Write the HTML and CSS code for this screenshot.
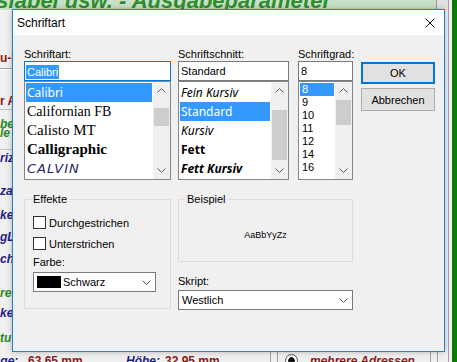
FILE: index.html
```html
<!DOCTYPE html>
<html lang="de">
<head>
    <meta charset="UTF-8">
    <meta name="viewport" content="width=device-width, initial-scale=1.0">
    <title>Schriftart</title>
    <link rel="stylesheet" href="styles.css">
</head>
<body>
    <div class="app">
        <div class="app-main">
            <div class="app-head">
                <div class="head-title"><span class="head-text">Adresslabel usw. - Ausgabeparameter</span></div>
                <div class="head-side"></div>
            </div>
            <div class="app-body">
                <div class="side">
                    <div class="side-row"></div>
                    <div class="side-row c-red">u-F</div>
                    <div class="side-row side-line"></div>
                    <div class="side-row c-red side-rule">r A</div>
                    <div class="side-row"></div>
                    <div class="side-row c-green">be</div>
                    <div class="side-row c-green">le</div>
                    <div class="side-row side-rule"></div>
                    <div class="side-row c-blue">riz</div>
                    <div class="side-row"></div>
                    <div class="side-row c-blue">zal</div>
                    <div class="side-row"></div>
                    <div class="side-row c-blue">ke</div>
                    <div class="side-row"></div>
                    <div class="side-row c-blue">gL</div>
                    <div class="side-row"></div>
                    <div class="side-row c-blue">chi</div>
                    <div class="side-row"></div>
                    <div class="side-row c-green">res</div>
                    <div class="side-row"></div>
                    <div class="side-row c-blue">ke</div>
                    <div class="side-row"></div>
                    <div class="side-row c-green">tu</div>
                </div>
            </div>
            <div class="app-foot">
                <span class="foot-label foot-first">Länge:</span>
                <span class="foot-value foot-w1">63,65 mm</span>
                <span class="foot-label foot-w2">Höhe:</span>
                <span class="foot-value foot-w3">32,95 mm</span>
                <span class="foot-sep"></span>
                <span class="foot-radio"></span>
                <span class="foot-value foot-option">mehrere Adressen</span>
                <span class="foot-sep"></span>
            </div>
        </div>
        <div class="app-edge"></div>
    </div>

    <div class="dialog">
        <div class="titlebar">
            <span class="title">Schriftart</span>
            <svg class="close" width="10" height="10" viewBox="0 0 10 10">
                <path d="M0.5 0.5L9.5 9.5M9.5 0.5L0.5 9.5" stroke="#111" stroke-width="1" fill="none"/>
            </svg>
        </div>

        <div class="dlg-body">
            <div class="pickers">
                <div class="picker col-font">
                    <div class="lbl">Schriftart:</div>
                    <div class="field is-focused"><span class="field-sel">Calibri</span></div>
                    <div class="listbox">
                        <ul class="items">
                            <li class="item is-selected ff-calibri">Calibri</li>
                            <li class="item ff-californian">Californian FB</li>
                            <li class="item ff-calisto">Calisto MT</li>
                            <li class="item ff-calligraphic">Calligraphic</li>
                            <li class="item ff-calvin">CALVIN</li>
                        </ul>
                        <div class="vscroll">
                            <span class="sb-btn"><svg width="9" height="5" viewBox="0 0 9 5"><path d="M0.5 4.5L4.5 0.5L8.5 4.5" stroke="#606060" fill="none"/></svg></span>
                            <div class="sb-track"><div class="sb-thumb" style="margin-top: 9px; height: 18px;"></div></div>
                            <span class="sb-btn"><svg width="9" height="5" viewBox="0 0 9 5"><path d="M0.5 0.5L4.5 4.5L8.5 0.5" stroke="#606060" fill="none"/></svg></span>
                        </div>
                    </div>
                </div>

                <div class="picker col-style">
                    <div class="lbl">Schriftschnitt:</div>
                    <div class="field">Standard</div>
                    <div class="listbox">
                        <ul class="items items-style">
                            <li class="item fs-italic">Fein Kursiv</li>
                            <li class="item is-selected">Standard</li>
                            <li class="item fs-italic">Kursiv</li>
                            <li class="item fs-bold">Fett</li>
                            <li class="item fs-bold fs-italic">Fett Kursiv</li>
                        </ul>
                        <div class="vscroll">
                            <span class="sb-btn"><svg width="9" height="5" viewBox="0 0 9 5"><path d="M0.5 4.5L4.5 0.5L8.5 4.5" stroke="#606060" fill="none"/></svg></span>
                            <div class="sb-track"><div class="sb-thumb" style="margin-top: 11px; height: 50px;"></div></div>
                            <span class="sb-btn"><svg width="9" height="5" viewBox="0 0 9 5"><path d="M0.5 0.5L4.5 4.5L8.5 0.5" stroke="#606060" fill="none"/></svg></span>
                        </div>
                    </div>
                </div>

                <div class="picker col-size">
                    <div class="lbl">Schriftgrad:</div>
                    <div class="field">8</div>
                    <div class="listbox">
                        <ul class="items items-size">
                            <li class="item is-selected">8</li>
                            <li class="item">9</li>
                            <li class="item">10</li>
                            <li class="item">11</li>
                            <li class="item">12</li>
                            <li class="item">14</li>
                            <li class="item">16</li>
                        </ul>
                        <div class="vscroll">
                            <span class="sb-btn"><svg width="9" height="5" viewBox="0 0 9 5"><path d="M0.5 4.5L4.5 0.5L8.5 4.5" stroke="#606060" fill="none"/></svg></span>
                            <div class="sb-track"><div class="sb-thumb" style="margin-top: 1px; height: 25px;"></div></div>
                            <span class="sb-btn"><svg width="9" height="5" viewBox="0 0 9 5"><path d="M0.5 0.5L4.5 4.5L8.5 0.5" stroke="#606060" fill="none"/></svg></span>
                        </div>
                    </div>
                </div>

                <div class="buttons">
                    <button class="btn btn-default">OK</button>
                    <button class="btn">Abbrechen</button>
                </div>
            </div>

            <div class="lower">
                <fieldset class="group effects">
                    <legend>Effekte</legend>
                    <div class="check-row"><span class="checkbox"></span>Durchgestrichen</div>
                    <div class="check-row"><span class="checkbox"></span>Unterstrichen</div>
                    <div class="lbl lbl-color">Farbe:</div>
                    <div class="combo combo-color">
                        <span class="swatch"></span>
                        <span class="combo-text">Schwarz</span>
                        <svg width="9" height="5" viewBox="0 0 9 5"><path d="M0.5 0.5L4.5 4.5L8.5 0.5" stroke="#555" fill="none"/></svg>
                    </div>
                </fieldset>

                <div class="lower-right">
                    <fieldset class="group">
                        <legend>Beispiel</legend>
                        <div class="sample">AaBbYyZz</div>
                    </fieldset>
                    <div class="lbl lbl-script">Skript:</div>
                    <div class="combo">
                        <span class="combo-text">Westlich</span>
                        <svg width="9" height="5" viewBox="0 0 9 5"><path d="M0.5 0.5L4.5 4.5L8.5 0.5" stroke="#555" fill="none"/></svg>
                    </div>
                </div>
            </div>
        </div>
    </div>
</body>
</html>
```

FILE: styles.css
```css
* {
    box-sizing: border-box;
}

body {
    margin: 0;
    width: 457px;
    height: 362px;
    overflow: hidden;
    position: relative;
    background-color: #f0f0f0;
    font-family: 'Liberation Sans', Arial, sans-serif;
    color: #000;
}

/* background application */

.app {
    display: flex;
    height: 362px;
}

.app-main {
    width: 448px;
    display: flex;
    flex-direction: column;
    overflow: hidden;
}

.app-edge {
    flex: 1;
    border-left: 1px solid #a5a5a5;
    background: linear-gradient(to right, #f0f0f0 3px, #0b7a0b 3px);
}

.app-head {
    height: 10px;
    display: flex;
    overflow: hidden;
}

.head-title {
    flex: 1;
    background-color: #c9e1c9;
    overflow: hidden;
}

.head-text {
    display: block;
    margin: -10px 0 0 -66px;
    font-size: 22px;
    line-height: 22px;
    font-weight: bold;
    font-style: italic;
    color: #2f8f2f;
    white-space: nowrap;
}

.head-side {
    width: 12px;
    border-left: 1px solid #9a9a9a;
    background-color: #e2e2e2;
}

.app-body {
    height: 340px;
    display: flex;
    overflow: hidden;
}

.side {
    width: 12px;
    overflow: hidden;
    display: grid;
    grid-template-rows: 37px 21px 24px 18px 9px 9px 9px 13px 16px 17px 16px 8px 16px 6px 16px 6px 16px 18px 16px 4px 16px 9px 16px;
    font-size: 12px;
    font-weight: bold;
    font-style: italic;
}

.side-row {
    display: flex;
    align-items: center;
    white-space: nowrap;
    overflow: hidden;
    line-height: 14px;
}

.side-line {
    border-top: 1px solid #a0a0a0;
    box-shadow: inset 0 1px 0 #fff;
}

.side-rule {
    border-bottom: 1px solid #c4c4c4;
}

.c-red {
    color: #8b1a1a;
    font-style: normal;
}

.c-green {
    color: #1f8a1f;
}

.c-blue {
    color: #1c1f86;
}

.app-foot {
    height: 12px;
    display: flex;
    align-items: flex-start;
    padding-top: 3px;
    line-height: 16px;
    font-size: 12px;
    font-weight: bold;
    white-space: nowrap;
    overflow: hidden;
}

.foot-label {
    color: #1c1f86;
    font-style: italic;
}

.foot-value {
    color: #8b1a1a;
}

.foot-first {
    width: 49px;
    margin-left: -21px;
    flex: none;
}

.foot-w1 { width: 98px; flex: none; }
.foot-w2 { width: 39px; flex: none; }
.foot-w3 { width: 105px; flex: none; }

.foot-sep {
    width: 8px;
    height: 16px;
    flex: none;
    margin-top: -3px;
    border-left: 1px solid #a0a0a0;
    border-right: 1px solid #a0a0a0;
}

.foot-radio {
    width: 13px;
    height: 13px;
    flex: none;
    margin: 1px 12px 0 7px;
    border: 1px solid #555;
    border-radius: 50%;
    background: radial-gradient(circle, #111 3px, #fff 3.5px);
}

.foot-option {
    width: 120px;
    flex: none;
    font-style: italic;
}

/* font dialog */

.dialog {
    position: absolute;
    left: 12px;
    top: 9px;
    width: 433px;
    height: 343px;
    border: 1px solid #1883d7;
    background-color: #f0f0f0;
    box-shadow: 0 0 6px rgba(0, 0, 0, 0.25);
    font-size: 11px;
}

.titlebar {
    height: 25px;
    background-color: #fff;
    display: flex;
    align-items: center;
    justify-content: space-between;
    padding: 0 9px 0 4px;
}

.title {
    font-size: 12px;
}

.dlg-body {
    padding: 12px 0 0 11px;
}

.pickers {
    display: flex;
    align-items: flex-start;
}

.col-font {
    width: 147px;
    margin-right: 7px;
}

.col-style {
    width: 111px;
    margin-right: 9px;
}

.col-size {
    width: 55px;
    margin-right: 8px;
}

.lbl {
    height: 14px;
    line-height: 14px;
}

.field {
    height: 20px;
    border: 1px solid #7a7a7a;
    background-color: #fff;
    padding: 0 2px;
    line-height: 18px;
    white-space: nowrap;
    overflow: hidden;
}

.field.is-focused {
    border-color: #0078d7;
    padding-left: 1px;
}

.field-sel {
    display: inline-block;
    line-height: 14px;
    padding: 0 1px;
    background-color: #3399ff;
    color: #fff;
    vertical-align: middle;
}

.listbox {
    height: 99px;
    display: flex;
    border: 1px solid #828790;
    background-color: #fff;
}

.items {
    flex: 1;
    margin: 0;
    padding: 1px;
    list-style: none;
    overflow: hidden;
}

.item {
    height: 19px;
    line-height: 19px;
    padding-left: 1px;
    white-space: nowrap;
    overflow: hidden;
}

.item.is-selected {
    background-color: #3399ff;
    color: #fff;
}

.ff-calibri {
    font-family: 'Noto Sans', sans-serif;
    font-size: 12px;
}

.ff-californian {
    font-family: 'Liberation Serif', serif;
    font-size: 14px;
}

.ff-calisto {
    font-family: 'Liberation Serif', serif;
    font-size: 15px;
}

.ff-calligraphic {
    font-family: 'Liberation Serif', serif;
    font-size: 15px;
    font-weight: bold;
}

.ff-calvin {
    font-family: 'DejaVu Sans', sans-serif;
    font-size: 13px;
    font-weight: 200;
    font-style: italic;
    letter-spacing: 1px;
    color: #26266a;
}

.items-style .item {
    font-family: 'Noto Sans', sans-serif;
    font-size: 12px;
}

.fs-italic {
    font-style: italic;
}

.fs-bold {
    font-weight: bold;
}

.items-size .item {
    height: 13px;
    line-height: 13px;
    padding-left: 2px;
}

.vscroll {
    width: 17px;
    display: flex;
    flex-direction: column;
    background-color: #f0f0f0;
}

.sb-btn {
    height: 17px;
    display: flex;
    align-items: center;
    justify-content: center;
}

.sb-track {
    flex: 1;
}

.sb-thumb {
    margin: 0 1px;
    background-color: #cdcdcd;
}

.buttons {
    width: 74px;
    padding-top: 15px;
}

.btn {
    display: block;
    width: 74px;
    height: 23px;
    margin-bottom: 4px;
    padding: 0;
    border: 1px solid #adadad;
    background-color: #e1e1e1;
    font-family: inherit;
    font-size: 11px;
    color: #000;
}

.btn-default {
    height: 22px;
    border: 2px solid #0078d7;
}

.lower {
    display: flex;
    align-items: flex-start;
    margin-top: 12px;
}

.group {
    margin: 0;
    min-width: 0;
    border: 1px solid #dcdcdc;
    padding: 0 8px;
}

.group legend {
    padding: 0 2px;
    margin-left: -2px;
    line-height: 14px;
}

.effects {
    width: 147px;
    margin-right: 7px;
    padding-top: 10px;
    padding-bottom: 16px;
}

.check-row {
    height: 13px;
    display: flex;
    align-items: center;
    gap: 3px;
    margin-bottom: 8px;
}

.checkbox {
    width: 13px;
    height: 13px;
    border: 1px solid #333;
    background-color: #fff;
}

.lbl-color {
    margin-top: -3px;
    margin-bottom: 3px;
}

.combo {
    height: 20px;
    display: flex;
    align-items: center;
    border: 1px solid #7a7a7a;
    background-color: #fff;
    padding: 0 4px 0 3px;
}

.combo-color {
    width: 123px;
}

.combo-text {
    flex: 1;
}

.swatch {
    width: 24px;
    height: 12px;
    margin-right: 2px;
    background-color: #000;
}

.lower-right {
    width: 175px;
}

.sample {
    height: 55px;
    padding-top: 3px;
    display: flex;
    align-items: center;
    justify-content: center;
    font-size: 9px;
}

.lbl-script {
    margin-top: 12px;
    margin-bottom: 2px;
}
```
